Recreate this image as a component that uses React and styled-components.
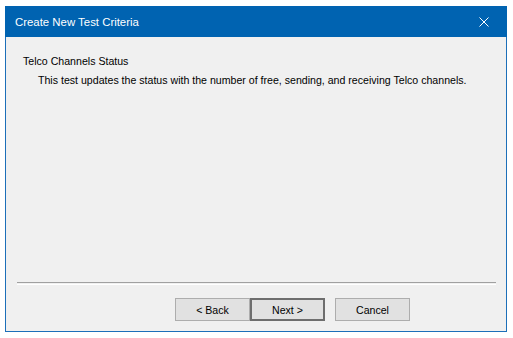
import styled, { createGlobalStyle } from "styled-components";

const GlobalStyle = createGlobalStyle`
  html, body {
    margin: 0;
    padding: 0;
    background: #ffffff;
  }
  body {
    font-family: "Liberation Sans", Arial, sans-serif;
  }
`;

const Page = styled.div`
  padding: 6px 0 0 5px;
`;

const Window = styled.div`
  width: 502px;
  height: 326px;
  box-sizing: border-box;
  border: 1px solid #1c6fb9;
  border-top: none;
  background: #f0f0f0;
  display: flex;
  flex-direction: column;
`;

const TitleBar = styled.div`
  height: 31px;
  margin: 0 -1px;
  background: #0063b1;
  color: #ffffff;
  display: flex;
  align-items: center;
  justify-content: space-between;
  padding: 0 0 0 10px;
  font-size: 11.4px;
`;

const CloseButton = styled.div`
  width: 46px;
  height: 31px;
  display: flex;
  align-items: center;
  justify-content: center;
`;

const Content = styled.div`
  flex: 1;
  padding: 18px 17px 0 17px;
  font-size: 10.6px;
  color: #000000;
`;

const Heading = styled.div`
  line-height: 13px;
`;

const Description = styled.div`
  line-height: 13px;
  margin-top: 6px;
  padding-left: 15px;
`;

const Separator = styled.div`
  margin: 0 10px 0 11px;
  height: 1px;
  border-top: 1px solid #a0a0a0;
  border-bottom: 1px solid #ffffff;
`;

const ButtonRow = styled.div`
  display: flex;
  justify-content: flex-end;
  padding: 13px 96px 10px 0;
`;

const Button = styled.button`
  width: 75px;
  height: 23px;
  box-sizing: border-box;
  margin: 0 0 0 ${p => p.$gap || 0}px;
  padding: 0;
  font-family: "Liberation Sans", Arial, sans-serif;
  font-size: 10.6px;
  color: #000000;
  background: #e1e1e1;
  border: ${p => (p.$default ? "2px solid #6e6e6e" : "1px solid #adadad")};
  border-radius: 0;
  outline: none;
`;

export default function App() {
  return (
    <>
      <GlobalStyle />
      <Page>
        <Window>
          <TitleBar>
            <span>Create New Test Criteria</span>
            <CloseButton>
              <svg width="10" height="10" viewBox="0 0 10 10">
                <path d="M0.5 0.5 L9.5 9.5 M9.5 0.5 L0.5 9.5" stroke="#ffffff" strokeWidth="1" fill="none" />
              </svg>
            </CloseButton>
          </TitleBar>
          <Content>
            <Heading>Telco Channels Status</Heading>
            <Description>
              This test updates the status with the number of free, sending, and receiving Telco channels.
            </Description>
          </Content>
          <Separator />
          <ButtonRow>
            <Button>&lt; Back</Button>
            <Button $default>Next &gt;</Button>
            <Button $gap={10}>Cancel</Button>
          </ButtonRow>
        </Window>
      </Page>
    </>
  );
}
